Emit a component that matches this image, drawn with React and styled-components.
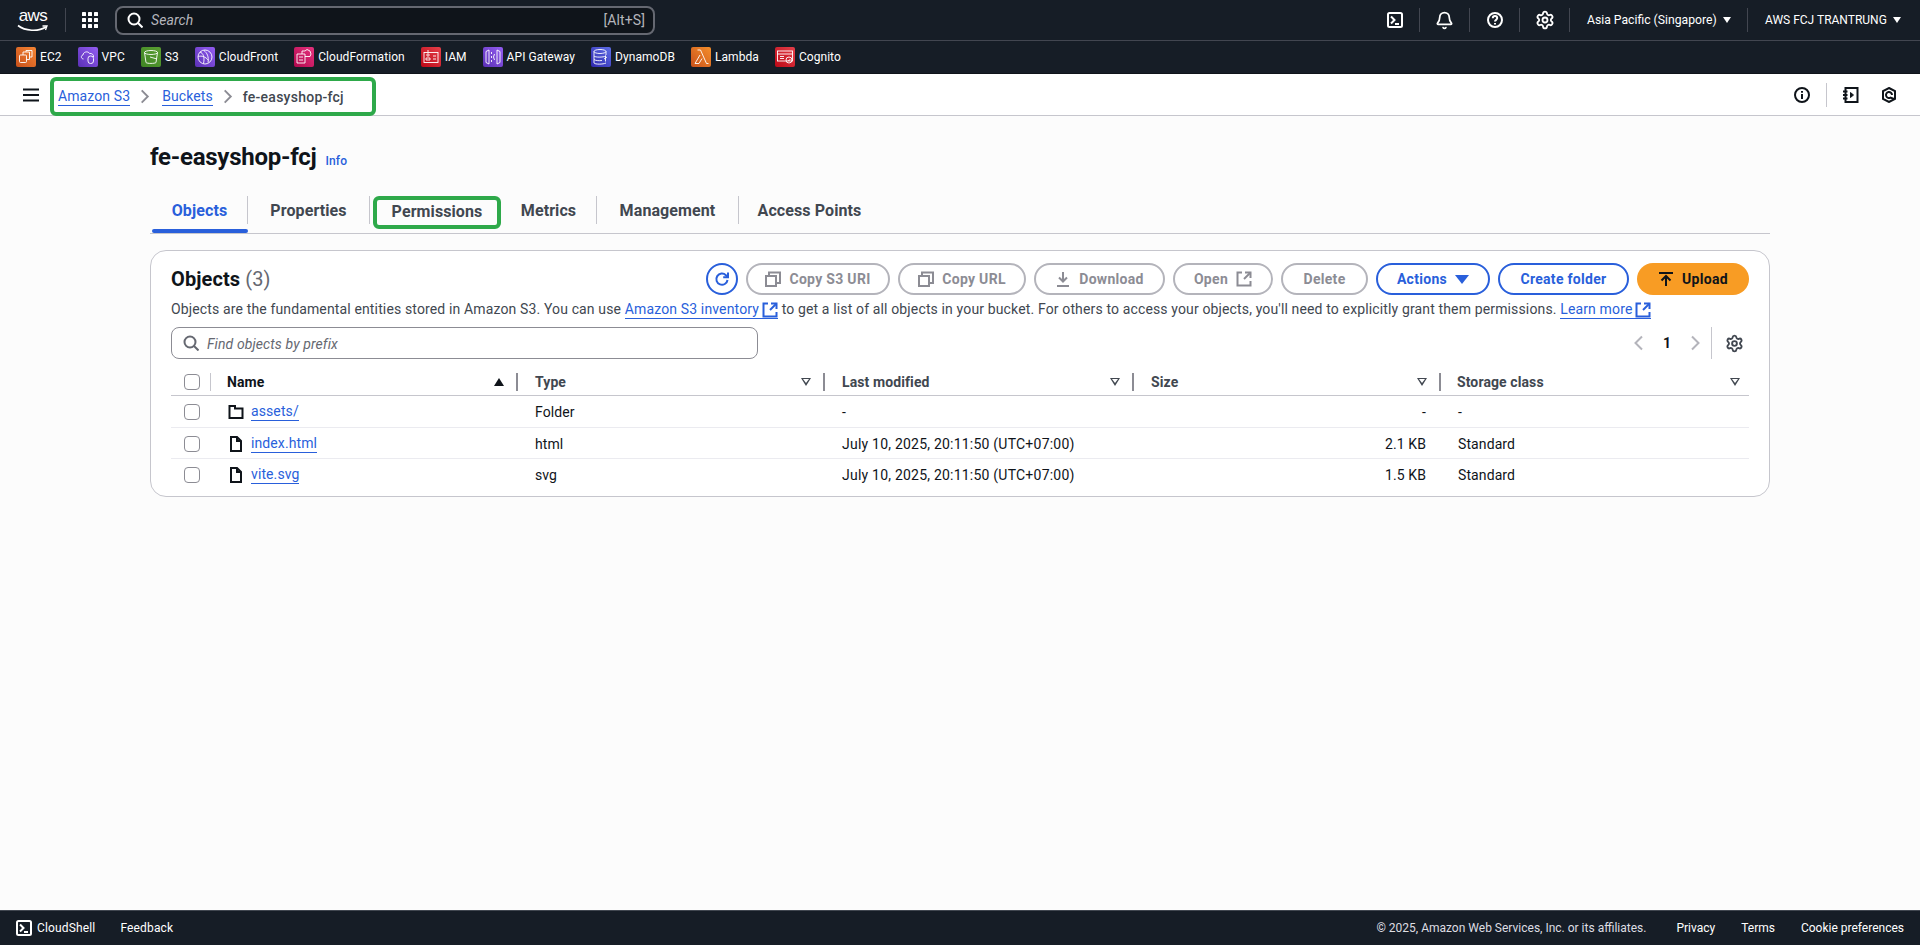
import styled, { createGlobalStyle } from 'styled-components';
import { Bell, Settings } from 'lucide-react';

const GlobalStyle = createGlobalStyle`
  html, body {
    margin: 0;
    padding: 0;
    background: #fcfcfc;
    font-family: Roboto, "Noto Sans", Arial, sans-serif;
    font-size: 14px;
    letter-spacing: 0.1px;
    color: #0f141a;
  }
  * { box-sizing: border-box; }
`;

const Line = ({ size = 16, color = 'currentColor', width = 2, children }) => (
  <svg width={size} height={size} viewBox="0 0 16 16" fill="none" stroke={color} strokeWidth={width} style={{ flexShrink: 0 }}>
    {children}
  </svg>
);

const SearchIcon = (p) => <Line {...p}><circle cx="7" cy="7" r="5.500" /><path d="M11 11l4.500 4.500" /></Line>;
const CopyIcon = (p) => <Line {...p}><path d="M1 5h10v10H1z" /><path d="M4 5V1.500h11V12h-4" /></Line>;
const ExternalIcon = (p) => <Line {...p}><path d="M9 1.500h5.500V7" /><path d="M14.500 1.500L8 8" /><path d="M6 1.500H1.500v13h13V10" /></Line>;
const TerminalIcon = (p) => <Line {...p}><rect x="1" y="1" width="14" height="14" rx="1.500" /><path d="M4 4.500L7.500 8 4 11.500" /><path d="M8 12h4" /></Line>;
const HelpIcon = (p) => <Line {...p}><circle cx="8" cy="8" r="7" /><path d="M5.800 6.200C5.800 4.900 6.800 4 8 4s2.200.9 2.200 2.100c0 1.800-2.200 1.700-2.200 3.400" /><path d="M8 11v1.600" /></Line>;
const InfoIcon = (p) => <Line {...p}><circle cx="8" cy="8" r="7" /><path d="M8 7v5" /><path d="M8 4v1.800" /></Line>;
const NotebookIcon = (p) => <Line {...p}><path d="M2.500 1h12v14h-12z" /><path d="M0 4.500h4.500M0 8h4.500M0 11.500h4.500" /><path d="M7.500 5.500L10.500 8l-3 2.500z" fill="currentColor" strokeWidth="1" /></Line>;
const HexIcon = (p) => <Line {...p}><path d="M8 1l6 3.200v7.600L8 15l-6-3.200V4.200z" /><path d="M11 8a3 3 0 1 0-1.500 2.600L13 12" /></Line>;
const MenuIcon = (p) => <Line {...p}><path d="M0 2.500h16M0 8h16M0 13.500h16" /></Line>;
const GridIcon = () => (
  <svg width="16" height="16" viewBox="0 0 16 16" fill="#fff">
    {[0, 6, 12].map((y) => [0, 6, 12].map((x) => <rect key={`${x}-${y}`} x={x} y={y} width="4" height="4" rx="0.6" />))}
  </svg>
);
const ChevronRight = (p) => <Line {...p}><path d="M5 1.500L11.500 8 5 14.500" /></Line>;
const ChevronLeft = (p) => <Line {...p}><path d="M11 1.500L4.500 8 11 14.500" /></Line>;
const RefreshIcon = (p) => <Line {...p}><path d="M13.500 9a5.600 5.600 0 1 1-1.600-4.800L13.500 6" /><path d="M14 1.500V6.300H9.200" /></Line>;
const DownloadIcon = (p) => <Line {...p}><path d="M8 1v9" /><path d="M4 6.500L8 10.500l4-4" /><path d="M2 15h12" /></Line>;
const UploadIcon = (p) => <Line {...p}><path d="M1 2h14" /><path d="M8 15V5.500" /><path d="M3.500 9.500L8 5l4.500 4.500" /></Line>;
const FolderIcon = (p) => <Line {...p}><path d="M1.500 2h5.500v2.500h7.500V14h-13z" /></Line>;
const FileIcon = (p) => <Line {...p}><path d="M3 1h6l4 4v10H3z" /><path d="M9 1v4h4" /></Line>;

const services = [
  { name: 'EC2', from: '#c8511b', to: '#f58534', art: <><rect x="3.500" y="8" width="7" height="7.500" rx="1" /><path d="M7 8V5h6.500v7.500h-3" /><path d="M10 5V3.500h6V10h-2.500" /></> },
  { name: 'VPC', from: '#5a30b5', to: '#945df2', art: <><path d="M5.500 12C3 12 2.500 8.500 5 8c0-3 5-4.500 6.500-1.500C14 6 16 8 15.500 10" /><rect x="10" y="9" width="5.500" height="7.500" rx="2.500" /></> },
  { name: 'S3', from: '#3f8624', to: '#5a9e32', art: <><ellipse cx="10" cy="5.500" rx="6.500" ry="2" /><path d="M3.500 5.500L5 15.500c1 1.200 9 1.200 10 0l1.500-10" /><path d="M9 10l7 2" /></> },
  { name: 'CloudFront', from: '#5a30b5', to: '#945df2', art: <><circle cx="10" cy="10" r="7" /><path d="M5 5c3 1 5 5 3.500 11.500M9 3.500c3 2.500 5 6 4 12M3.500 9.500c3-1 7 0 10 4" /></> },
  { name: 'CloudFormation', from: '#b0084d', to: '#e7327e', art: <><path d="M3 7h8v9H3z" /><path d="M5 10h4M5 13h4" /><path d="M8 7V4h3l2-1.500L16 4l1 3-1 2.500h-5" /></> },
  { name: 'IAM', from: '#bd0816', to: '#e5404a', art: <><rect x="3" y="5.500" width="14" height="10" /><circle cx="7" cy="8" r="1.200" /><path d="M5 13v-2h4v2zM7 3v2.500M12 9h3M12 12h3" /></> },
  { name: 'API Gateway', from: '#5a30b5', to: '#945df2', art: <><path d="M6 3L3 4.500v11L6 17zM14 3l3 1.500v11L14 17z" /><path d="M8.500 5v2M8.500 9v2M8.500 13v2M11.500 7l-1 3 1 3" /></> },
  { name: 'DynamoDB', from: '#2e27ad', to: '#5f6fe6', art: <><ellipse cx="9" cy="4.500" rx="6" ry="2" /><path d="M3 4.500V16c1 1.500 9 1.500 12 0M3 9c1 1.500 9 1.500 12 0M15 4.500V8M3 12.500c1 1 5 1.500 8 1M14.500 8.500v6M13 12l3-2" /></> },
  { name: 'Lambda', from: '#c8511b', to: '#f58f2b', art: <><path d="M6.500 3h3l6 13.500h2M9 8l-5 8.500h4l3-5" /></> },
  { name: 'Cognito', from: '#bd0816', to: '#e5404a', art: <><rect x="2.500" y="4" width="15" height="10" /><path d="M2.500 7h15M5 9.500h4M5 11.500h4" /><circle cx="14" cy="13" r="3" /><path d="M12.800 13l1 1 1.500-2" /></> },
];

const ServiceIcon = ({ from, to, children }) => (
  <ServiceSquare $from={from} $to={to}>
    <svg width="20" height="20" viewBox="0 0 20 20" fill="none" stroke="#fff" strokeWidth="0.9">{children}</svg>
  </ServiceSquare>
);

const columns = [
  { name: 'Name', sorted: true },
  { name: 'Type' },
  { name: 'Last modified' },
  { name: 'Size' },
  { name: 'Storage class' },
];

const rows = [
  { key: 'assets/', folder: true, type: 'Folder', date: '-', size: '-', cls: '-' },
  { key: 'index.html', type: 'html', date: 'July 10, 2025, 20:11:50 (UTC+07:00)', size: '2.1 KB', cls: 'Standard' },
  { key: 'vite.svg', type: 'svg', date: 'July 10, 2025, 20:11:50 (UTC+07:00)', size: '1.5 KB', cls: 'Standard' },
];

const tabs = [
  { name: 'Objects', width: 96, active: true },
  { name: 'Properties', width: 122 },
  { name: 'Permissions', width: 131, framed: true },
  { name: 'Metrics', width: 96 },
  { name: 'Management', width: 142 },
  { name: 'Access Points', width: 141, last: true },
];

export default function App() {
  return (
    <Shell>
      <GlobalStyle />
      <TopNav>
        <Logo>
          <LogoText>aws</LogoText>
          <svg width="32" height="9" viewBox="0 0 32 9" fill="none" stroke="#fff" strokeWidth="1.6">
            <path d="M1 1.500C8 7 21 8 29 3" />
            <path d="M25.500 2h4.500l-1.500 4" strokeWidth="1.300" />
          </svg>
        </Logo>
        <LogoDivider />
        <GridButton><GridIcon /></GridButton>
        <SearchBar>
          <SearchIcon size={16} color="#fff" />
          <SearchHint>Search</SearchHint>
          <Shortcut>[Alt+S]</Shortcut>
        </SearchBar>
        <NavRight>
          <NavCell><TerminalIcon color="#fff" /></NavCell>
          <NavCell><Bell size={19} strokeWidth={2.2} color="#fff" /></NavCell>
          <NavCell><HelpIcon color="#fff" /></NavCell>
          <NavCell><Settings size={20} strokeWidth={2.2} color="#fff" /></NavCell>
          <NavMenu $width={178} $size={12.2}>Asia Pacific (Singapore)<Caret /></NavMenu>
          <NavMenu $width={172} $last $size={12}>AWS FCJ TRANTRUNG<Caret /></NavMenu>
        </NavRight>
      </TopNav>
      <ServiceBar>
        {services.map((s) => (
          <Service key={s.name}>
            <ServiceIcon from={s.from} to={s.to}>{s.art}</ServiceIcon>
            {s.name}
          </Service>
        ))}
      </ServiceBar>
      <CrumbBar>
        <MenuButton><MenuIcon /></MenuButton>
        <CrumbFrame>
          <CrumbLink>Amazon S3</CrumbLink>
          <CrumbSep><ChevronRight size={15} color="#8c8c94" /></CrumbSep>
          <CrumbLink>Buckets</CrumbLink>
          <CrumbSep><ChevronRight size={15} color="#8c8c94" /></CrumbSep>
          <CrumbCurrent>fe-easyshop-fcj</CrumbCurrent>
        </CrumbFrame>
        <CrumbTools>
          <InfoIcon color="#0f141a" />
          <ToolDivider />
          <NotebookIcon color="#0f141a" />
          <HexWrap><HexIcon color="#0f141a" /></HexWrap>
        </CrumbTools>
      </CrumbBar>
      <Main>
        <TitleRow>
          <Title>fe-easyshop-fcj</Title>
          <InfoLink>Info</InfoLink>
        </TitleRow>
        <TabList>
          {tabs.map((t) => (
            <Tab key={t.name} $width={t.width} $active={t.active}>
              <TabLabel $framed={t.framed} $last={t.last} $active={t.active}>{t.name}</TabLabel>
            </Tab>
          ))}
        </TabList>
        <Card>
          <CardHead>
            <CardTitle>Objects <Count>(3)</Count></CardTitle>
            <Actions>
              <RoundButton><RefreshIcon color="#295fdb" /></RoundButton>
              <Button $width={144}><CopyIcon />Copy S3 URI</Button>
              <Button $width={128}><CopyIcon />Copy URL</Button>
              <Button $width={131}><DownloadIcon />Download</Button>
              <Button $width={100}>Open<ExternalIcon /></Button>
              <Button $width={87}>Delete</Button>
              <Button $width={114} $variant="normal">Actions<Caret $size={7} /></Button>
              <Button $width={131} $variant="normal">Create folder</Button>
              <Button $width={112} $variant="primary"><UploadIcon />Upload</Button>
            </Actions>
          </CardHead>
          <Description>
            Objects are the fundamental entities stored in Amazon S3. You can use{' '}
            <TextLink>Amazon S3 inventory <ExternalIcon color="#295fdb" /></TextLink>
            {' '}to get a list of all objects in your bucket. For others to access your objects, you'll need to explicitly grant them permissions.{' '}
            <TextLink>Learn more <ExternalIcon color="#295fdb" /></TextLink>
          </Description>
          <FilterRow>
            <FilterBox>
              <SearchIcon color="#656871" />
              <FilterHint>Find objects by prefix</FilterHint>
            </FilterBox>
            <Pager>
              <ChevronLeft color="#b4b4bb" />
              <PageNumber>1</PageNumber>
              <ChevronRight color="#b4b4bb" />
              <PagerDivider />
              <Settings size={19} strokeWidth={2.4} color="#414750" />
            </Pager>
          </FilterRow>
          <Table>
            <HeadRow>
              <HeadCheck><Checkbox /></HeadCheck>
              {columns.map((c, i) => (
                <HeadCell key={c.name} $last={i === columns.length - 1} $sorted={c.sorted}>
                  {c.name}
                  <SortMark $sorted={c.sorted} />
                </HeadCell>
              ))}
            </HeadRow>
            {rows.map((r, i) => (
              <Row key={r.key} $first={i === 0} $last={i === rows.length - 1}>
                <RowCheck><Checkbox /></RowCheck>
                <NameCell>
                  {r.folder ? <FolderIcon /> : <FileIcon />}
                  <RowLink>{r.key}</RowLink>
                </NameCell>
                <Cell>{r.type}</Cell>
                <DateCell>{r.date}</DateCell>
                <Cell $right>{r.size}</Cell>
                <Cell>{r.cls}</Cell>
              </Row>
            ))}
          </Table>
        </Card>
      </Main>
      <Footer>
        <FooterLeft>
          <TerminalIcon color="#fff" />
          <FooterItem>CloudShell</FooterItem>
          <FeedbackItem>Feedback</FeedbackItem>
        </FooterLeft>
        <FooterRight>
          <Copyright>© 2025, Amazon Web Services, Inc. or its affiliates.</Copyright>
          <FooterItem>Privacy</FooterItem>
          <FooterItem>Terms</FooterItem>
          <FooterItem>Cookie preferences</FooterItem>
        </FooterRight>
      </Footer>
    </Shell>
  );
}

const Shell = styled.div`
  height: 945px;
  overflow: hidden;
  display: flex;
  flex-direction: column;
`;

const TopNav = styled.div`
  height: 41px;
  flex-shrink: 0;
  background: #161d26;
  border-bottom: 1px solid #424650;
  display: flex;
  align-items: center;
  color: #fff;
  padding-left: 17px;
`;

const Logo = styled.div`
  width: 32px;
  height: 26px;
  display: flex;
  flex-direction: column;
  align-items: center;
  margin-top: -1px;
`;

const LogoText = styled.span`
  font-family: "Liberation Sans", Arial, sans-serif;
  font-size: 17px;
  line-height: 17px;
  letter-spacing: -0.5px;
  color: #fff;
`;

const LogoDivider = styled.div`
  width: 1px;
  height: 24px;
  background: #424650;
  margin-left: 16px;
`;

const GridButton = styled.div`
  display: flex;
  margin-left: 16px;
`;

const SearchBar = styled.div`
  width: 540px;
  height: 29px;
  margin-left: 17px;
  border: 2px solid #656871;
  border-radius: 8px;
  background: #0f141a;
  display: flex;
  align-items: center;
  padding: 0 8px 0 10px;
`;

const SearchHint = styled.span`
  font-style: italic;
  color: #b4b4bb;
  font-size: 14px;
  margin-left: 8px;
`;

const Shortcut = styled.span`
  margin-left: auto;
  color: #b4b4bb;
  font-size: 14px;
`;

const NavRight = styled.div`
  margin-left: auto;
  display: flex;
  align-items: center;
`;

const NavCell = styled.div`
  width: 50px;
  height: 24px;
  display: flex;
  align-items: center;
  justify-content: center;
  border-right: 1px solid #424650;
`;

const NavMenu = styled.div`
  width: ${({ $width }) => $width}px;
  height: 24px;
  display: flex;
  align-items: center;
  gap: 6px;
  padding-left: 17px;
  font-size: ${({ $size }) => $size}px;
  letter-spacing: 0;
  color: #fff;
  white-space: nowrap;
  border-right: ${({ $last }) => ($last ? 'none' : '1px solid #424650')};
`;

const Caret = styled.span`
  width: 0;
  height: 0;
  border-left: ${({ $size }) => $size || 4}px solid transparent;
  border-right: ${({ $size }) => $size || 4}px solid transparent;
  border-top: ${({ $size }) => ($size ? $size + 2 : 6)}px solid currentColor;
`;

const ServiceBar = styled.div`
  height: 33px;
  flex-shrink: 0;
  background: #161d26;
  border-bottom: 1px solid #0f141a;
  display: flex;
  align-items: center;
  gap: 16px;
  padding-left: 16px;
`;

const Service = styled.div`
  display: flex;
  align-items: center;
  gap: 4px;
  color: #fff;
  font-size: 12px;
  letter-spacing: 0.06px;
  white-space: nowrap;
`;

const ServiceSquare = styled.span`
  width: 20px;
  height: 20px;
  border-radius: 2px;
  display: flex;
  background: linear-gradient(45deg, ${({ $from }) => $from}, ${({ $to }) => $to});
`;

const CrumbBar = styled.div`
  height: 42px;
  flex-shrink: 0;
  background: #fff;
  border-bottom: 1px solid #c6c6cd;
  display: flex;
  align-items: flex-end;
  padding: 0 23px;
  position: relative;
`;

const MenuButton = styled.div`
  display: flex;
  align-self: center;
  margin-right: 11px;
`;

const CrumbFrame = styled.div`
  width: 326px;
  height: 39px;
  border: 4px solid #2ea94a;
  border-radius: 6px;
  background: #fff;
  display: flex;
  align-items: center;
  padding-left: 4px;
  margin-bottom: -1px;
`;

const CrumbLink = styled.span`
  color: #295fdb;
  font-size: 14px;
  border-bottom: 1px solid #295fdb;
  line-height: 17px;
`;

const CrumbSep = styled.span`
  display: flex;
  margin: 0 10px 0 7px;
`;

const CrumbCurrent = styled.span`
  color: #414750;
  font-size: 14px;
  font-weight: 500;
  letter-spacing: 0.25px;
  margin-left: -2px;
`;

const CrumbTools = styled.div`
  margin-left: auto;
  align-self: center;
  display: flex;
  align-items: center;
  gap: 16px;
`;

const HexWrap = styled.span`
  display: flex;
  margin-left: 6px;
`;

const ToolDivider = styled.div`
  width: 1px;
  height: 24px;
  background: #c6c6cd;
`;

const Main = styled.main`
  flex: 1;
  padding: 0 150px;
  display: flex;
  flex-direction: column;
`;

const TitleRow = styled.div`
  display: flex;
  align-items: baseline;
  gap: 9px;
  height: 80px;
  padding-top: 26px;
`;

const Title = styled.h1`
  margin: 0;
  font-size: 24px;
  line-height: 30px;
  font-weight: 700;
  letter-spacing: -0.25px;
  color: #0f141a;
`;

const InfoLink = styled.span`
  font-size: 12px;
  font-weight: 500;
  color: #295fdb;
`;

const TabList = styled.div`
  height: 38px;
  display: flex;
  padding-left: 2px;
  border-bottom: 1px solid #c6c6cd;
  margin-bottom: 16px;
`;

const Tab = styled.div`
  width: ${({ $width }) => $width}px;
  height: 37px;
  position: relative;
  &::after {
    content: '';
    display: ${({ $active }) => ($active ? 'block' : 'none')};
    position: absolute;
    left: 0;
    right: 0;
    bottom: 0;
    height: 4px;
    border-radius: 2px;
    background: #295fdb;
  }
`;

const TabLabel = styled.div`
  height: ${({ $framed }) => ($framed ? 33 : 28)}px;
  display: flex;
  align-items: center;
  justify-content: center;
  font-size: 16px;
  font-weight: 700;
  color: ${({ $active }) => ($active ? '#295fdb' : '#414750')};
  border-right: ${({ $framed, $last }) => ($framed || $last ? 'none' : '1px solid #c6c6cd')};
  ${({ $framed }) => $framed && `
    margin-left: 3px;
    padding-bottom: 2px;
    border: 4px solid #2ea94a;
    border-radius: 6px;
  `}
`;

const Card = styled.section`
  height: 247px;
  background: #fff;
  border: 1px solid #c6c6cd;
  border-radius: 16px;
  padding: 12px 20px 0;
`;

const CardHead = styled.div`
  display: flex;
  align-items: center;
  justify-content: space-between;
  height: 32px;
`;

const CardTitle = styled.h2`
  margin: 0;
  font-size: 20px;
  line-height: 24px;
  font-weight: 700;
  color: #0f141a;
`;

const Count = styled.span`
  font-weight: 400;
  color: #656871;
`;

const Actions = styled.div`
  display: flex;
  gap: 8px;
`;

const RoundButton = styled.button`
  width: 32px;
  height: 32px;
  border-radius: 50%;
  border: 2px solid #295fdb;
  background: #fff;
  padding: 0;
  display: flex;
  align-items: center;
  justify-content: center;
`;

const Button = styled.button`
  width: ${({ $width }) => $width}px;
  height: 32px;
  border-radius: 20px;
  display: flex;
  align-items: center;
  justify-content: center;
  gap: 8px;
  padding: 0;
  font-family: inherit;
  font-size: 14px;
  font-weight: 700;
  letter-spacing: 0.3px;
  ${({ $variant }) => {
    if ($variant === 'primary') return 'background: #f89c24; border: none; color: #0f141a;';
    if ($variant === 'normal') return 'background: #fff; border: 2px solid #295fdb; color: #295fdb;';
    return 'background: #fff; border: 2px solid #b4b4bb; color: #8c8c94;';
  }}
`;

const Description = styled.div`
  margin-top: 4px;
  height: 20px;
  line-height: 20px;
  font-size: 14px;
  letter-spacing: 0.14px;
  color: #414750;
  white-space: nowrap;
`;

const TextLink = styled.span`
  color: #295fdb;
  border-bottom: 1px solid #295fdb;
  display: inline-flex;
  align-items: center;
  gap: 3px;
  line-height: 17px;
  vertical-align: baseline;
`;

const FilterRow = styled.div`
  margin-top: 8px;
  height: 32px;
  display: flex;
  align-items: center;
  justify-content: space-between;
`;

const FilterBox = styled.div`
  width: 587px;
  height: 32px;
  border: 1px solid #8c8c94;
  border-radius: 8px;
  display: flex;
  align-items: center;
  gap: 8px;
  padding-left: 11px;
`;

const FilterHint = styled.span`
  font-style: italic;
  color: #656871;
  margin-top: 1px;
`;

const Pager = styled.div`
  display: flex;
  align-items: center;
  padding-right: 5px;
`;

const PageNumber = styled.span`
  width: 40px;
  text-align: center;
  font-weight: 700;
  color: #0f141a;
`;

const PagerDivider = styled.div`
  width: 1px;
  height: 32px;
  background: #c6c6cd;
  margin: 0 13px 0 8px;
`;

const Table = styled.div`
  margin-top: 7px;
  display: flex;
  flex-direction: column;
`;

const gridColumns = '40px 307px 307px 309px 307px 1fr';

const HeadRow = styled.div`
  display: grid;
  grid-template-columns: ${gridColumns};
  height: 30px;
  padding-top: 2px;
  align-items: center;
  border-bottom: 1px solid #c6c6cd;
`;

const Row = styled.div`
  display: grid;
  grid-template-columns: ${gridColumns};
  height: ${({ $first }) => ($first ? 32 : 31)}px;
  padding-top: 1px;
  align-items: center;
  border-bottom: ${({ $last }) => ($last ? 'none' : '1px solid #ebebf0')};
`;

const HeadCheck = styled.div`
  height: 18px;
  display: flex;
  align-items: center;
  padding-left: 13px;
  border-right: 1px solid #c6c6cd;
`;

const RowCheck = styled.div`
  display: flex;
  padding-left: 13px;
`;

const Checkbox = styled.span`
  width: 16px;
  height: 16px;
  border: 1px solid #8c8c94;
  border-radius: 4px;
  background: #fff;
`;

const HeadCell = styled.div`
  height: 18px;
  display: flex;
  align-items: center;
  justify-content: space-between;
  padding: 0 ${({ $last }) => ($last ? 9 : 12)}px 0 ${({ $sorted, $last }) => ($sorted || $last ? 16 : 17)}px;
  font-weight: 700;
  color: ${({ $sorted }) => ($sorted ? '#0f141a' : '#414750')};
  border-right: ${({ $last }) => ($last ? 'none' : '2px solid #8c8c94')};
`;

const SortMark = styled.span`
  width: 0;
  height: 0;
  ${({ $sorted }) => ($sorted ? `
    border-left: 5.500px solid transparent;
    border-right: 5.500px solid transparent;
    border-bottom: 8px solid #0f141a;
  ` : `
    border-left: 5.500px solid transparent;
    border-right: 5.500px solid transparent;
    border-top: 8px solid #414750;
    position: relative;
    &::after {
      content: '';
      position: absolute;
      left: -3px;
      top: -6.500px;
      border-left: 3px solid transparent;
      border-right: 3px solid transparent;
      border-top: 4px solid #fff;
    }
  `)}
`;

const NameCell = styled.div`
  display: flex;
  align-items: center;
  gap: 7px;
  padding-left: 17px;
`;

const RowLink = styled.span`
  color: #295fdb;
  border-bottom: 1px solid #295fdb;
  line-height: 17px;
`;

const Cell = styled.div`
  padding: 0 ${({ $right }) => ($right ? '15px' : '0')} 0 17px;
  text-align: ${({ $right }) => ($right ? 'right' : 'left')};
  color: #0f141a;
`;

const DateCell = styled(Cell)`
  letter-spacing: 0.22px;
`;

const Footer = styled.footer`
  height: 35px;
  flex-shrink: 0;
  background: #161d26;
  border-top: 1px solid #414750;
  display: flex;
  align-items: center;
  justify-content: space-between;
  padding: 0 16px;
  color: #fff;
  font-size: 12px;
  letter-spacing: 0;
`;

const FooterLeft = styled.div`
  display: flex;
  align-items: center;
  gap: 5px;
  letter-spacing: 0.15px;
`;

const FooterItem = styled.span`
  color: #fff;
`;

const FeedbackItem = styled.span`
  color: #fff;
  margin-left: 20px;
`;

const FooterRight = styled.div`
  display: flex;
  align-items: center;
  gap: 26px;
`;

const Copyright = styled.span`
  color: #dedee3;
  margin-right: 4px;
`;
